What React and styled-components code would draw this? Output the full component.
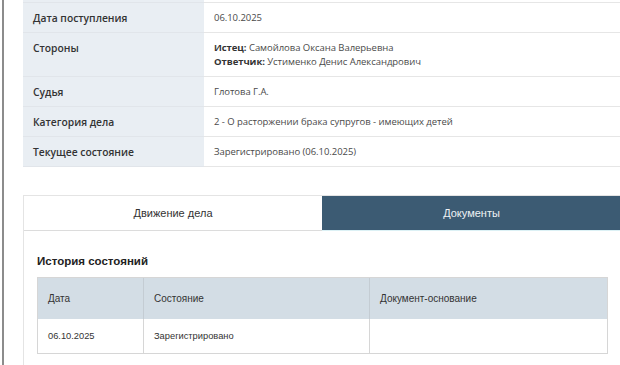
import React from "react";
import styled, { createGlobalStyle } from "styled-components";

const Global = createGlobalStyle`
  html, body { margin: 0; padding: 0; background: #fff; }
  body { font-family: "Open Sans", "Liberation Sans", Arial, sans-serif; overflow: hidden; }
  * { box-sizing: border-box; }
`;

const Page = styled.div`
  margin-left: 2px;
  border-left: 2px solid #8c8c8c;
  padding-left: 19px;
  min-height: 365px;
  width: 620px;
  overflow: hidden;
`;

const InfoTable = styled.div`
  display: grid;
  grid-template-columns: 181px 1fr;
  width: 600px;
`;

const Label = styled.div`
  background: #e9eef3;
  color: #333;
  font-weight: 600;
  font-size: 10.3px;
  line-height: 14px;
  padding: ${(p) => (p.$cut ? "0" : "8px 10px 7px")};
  height: ${(p) => (p.$cut ? "3px" : "auto")};
  border-bottom: 1px solid #e1e5ea;
`;

const Value = styled.div`
  background: #fff;
  color: #4a4a4a;
  font-size: 9.5px;
  letter-spacing: -0.05px;
  line-height: 14px;
  padding: ${(p) => (p.$cut ? "0" : "8px 10px 7px")};
  height: ${(p) => (p.$cut ? "3px" : "auto")};
  border-bottom: 1px solid #e6e6e6;
  b { font-weight: 700; color: #333; }
`;

const Panel = styled.div`
  margin-top: 28px;
  width: 599px;
  border: 1px solid #e4e4e4;
  border-bottom: none;
  min-height: 180px;
  font-family: "Liberation Sans", Arial, sans-serif;
`;

const Tabs = styled.div`
  display: grid;
  grid-template-columns: 298px 1fr;
`;

const Tab = styled.div`
  height: 35px;
  display: flex;
  align-items: center;
  justify-content: center;
  font-size: 11px;
  color: ${(p) => (p.$active ? "#eef2f5" : "#333")};
  background: ${(p) => (p.$active ? "#3c5b73" : "#fff")};
  border-bottom: 1px solid ${(p) => (p.$active ? "#dcf1f5" : "#dcdcdc")};
`;

const Content = styled.div`
  padding: 22px 13px 0 13px;
`;

const Heading = styled.h3`
  margin: 0 0 8px 0;
  font-size: 11.5px;
  font-weight: 700;
  color: #222;
  line-height: 16px;
`;

const Table = styled.div`
  display: grid;
  grid-template-columns: 105px 226px 1fr;
  border: 1px solid #d6d6d6;
`;

const Th = styled.div`
  background: #d3dde5;
  height: 41px;
  display: flex;
  align-items: center;
  padding-left: 10px;
  font-size: 10px;
  color: #333;
  border-left: ${(p) => (p.$first ? "none" : "1px solid #c4ccd3")};
`;

const Td = styled.div`
  height: 34px;
  display: flex;
  align-items: center;
  padding-left: 10px;
  font-size: 9.3px;
  color: #333;
  background: #fff;
  border-left: ${(p) => (p.$first ? "none" : "1px solid #d6d6d6")};
`;

const rows = [
  ["Дата поступления", "06.10.2025"],
  [
    "Стороны",
    <>
      <b>Истец:</b> Самойлова Оксана Валерьевна
      <br />
      <b>Ответчик:</b> Устименко Денис Александрович
    </>,
  ],
  ["Судья", "Глотова Г.А."],
  ["Категория дела", "2 - О расторжении брака супругов - имеющих детей"],
  ["Текущее состояние", "Зарегистрировано (06.10.2025)"],
];

export default function App() {
  return (
    <>
      <Global />
      <Page>
        <InfoTable>
          <Label $cut />
          <Value $cut />
          {rows.map(([l, v], i) => (
            <React.Fragment key={i}>
              <Label>{l}</Label>
              <Value>{v}</Value>
            </React.Fragment>
          ))}
        </InfoTable>
        <Panel>
          <Tabs>
            <Tab>Движение дела</Tab>
            <Tab $active>Документы</Tab>
          </Tabs>
          <Content>
            <Heading>История состояний</Heading>
            <Table>
              <Th $first>Дата</Th>
              <Th>Состояние</Th>
              <Th>Документ-основание</Th>
              <Td $first>06.10.2025</Td>
              <Td>Зарегистрировано</Td>
              <Td></Td>
            </Table>
          </Content>
        </Panel>
      </Page>
    </>
  );
}
